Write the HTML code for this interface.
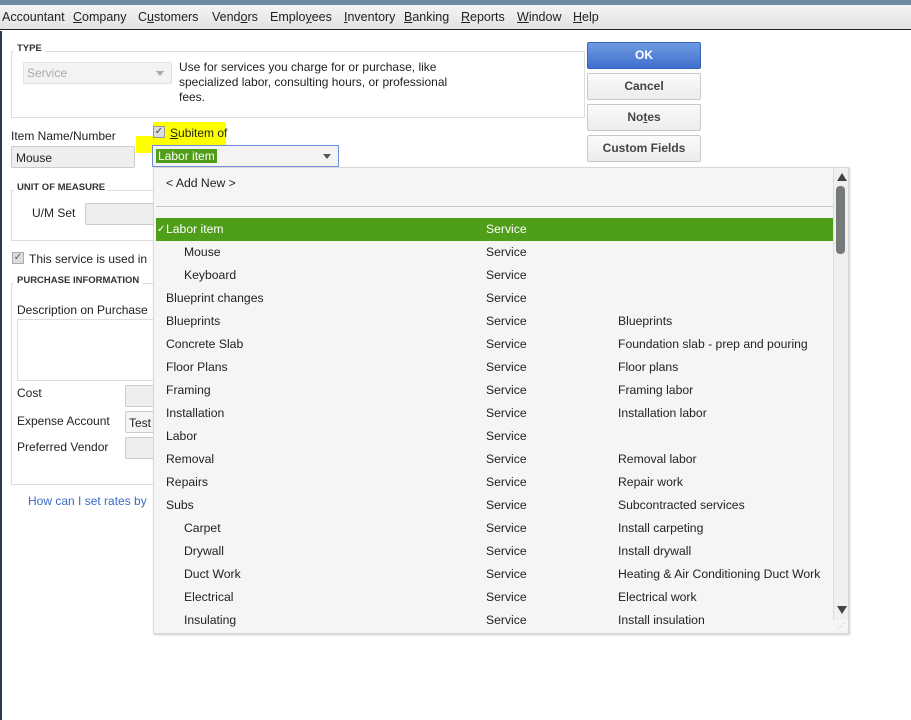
<!DOCTYPE html>
<html><head><meta charset="utf-8"><style>
*{box-sizing:border-box}
body{margin:0;width:911px;height:720px;overflow:hidden;background:#fff;font-family:"Liberation Sans",sans-serif;font-size:12px;color:#222;position:relative}
.a{position:absolute}
.top{left:0;top:0;width:911px;height:5px;background:#6b8aa1}
.menu{left:0;top:5px;width:911px;height:25px;background:linear-gradient(#f4f4f4,#e2e2e2);border-bottom:1px solid #222}
.menu span{position:absolute;top:5px;font-size:12.5px;color:#222}
.ls{left:0;top:31px;width:2px;height:689px;background:#2b3a4a}
.grp{border:1px solid #ddd}
.lbl{font-size:9.5px;font-weight:bold;color:#333;background:#fff;padding:0 3px}
.fld{border:1px solid #ccc;border-radius:2px;background:#eee}
.btn{left:587px;width:114px;height:27px;border:1px solid #c8c8c8;border-radius:2px;background:linear-gradient(#fbfbfb,#ececec);text-align:center;line-height:25px;font-weight:bold;font-size:12px;color:#444}
.dd{left:153px;top:167px;width:696px;height:467px;background:#f5f5f5;border:1px solid #d8d8d8;box-shadow:1px 1px 2px #ccc}
.r{position:absolute;left:0;width:679px;height:23px;line-height:23px;font-size:12.2px;color:#222}
.r span{position:absolute}
</style></head><body>
<div class="a top"></div>
<div class="a menu">
<span style="left:2px">Accountant</span><span style="left:73px"><u>C</u>ompany</span><span style="left:138px">C<u>u</u>stomers</span><span style="left:212px">Vend<u>o</u>rs</span><span style="left:270px">Emplo<u>y</u>ees</span><span style="left:344px"><u>I</u>nventory</span><span style="left:404px"><u>B</u>anking</span><span style="left:461px"><u>R</u>eports</span><span style="left:517px"><u>W</u>indow</span><span style="left:573px"><u>H</u>elp</span>
</div>
<div class="a ls"></div>

<div class="a grp" style="left:11px;top:51px;width:574px;height:67px"></div>
<div class="a lbl" style="left:14px;top:43px">TYPE</div>
<div class="a fld" style="left:23px;top:62px;width:149px;height:22px;background:#f3f3f3;border-color:#e2e2e2;color:#aaa;padding:3px 0 0 3px">Service<span style="position:absolute;right:7px;top:8px;border:4px solid transparent;border-top:5px solid #aaa"></span></div>
<div class="a" style="left:179px;top:60px;line-height:15px;font-size:12px">Use for services you charge for or purchase, like<br>specialized labor, consulting hours, or professional<br>fees.</div>

<div class="a" style="left:11px;top:129px">Item Name/Number</div>
<div class="a fld" style="left:11px;top:146px;width:124px;height:22px;padding:4px 0 0 4px">Mouse</div>
<div class="a" style="left:136px;top:136px;width:90px;height:17px;background:#ffff00"></div>
<div class="a" style="left:153px;top:122px;width:73px;height:31px;background:#ffff00;border-radius:2px"></div>
<div class="a" style="left:153px;top:126px;width:12px;height:12px;border:1px solid #999;background:#ddd;font-size:10px;line-height:10px;text-align:center;color:#444">✓</div>
<div class="a" style="left:170px;top:126px"><u>S</u>ubitem of</div>
<div class="a" style="left:152px;top:145px;width:187px;height:22px;border:1px solid #6a8fd8;background:#f3f3f3"><span style="position:absolute;left:3px;top:3px;background:#4f9e1a;color:#fff;padding:0 2px;line-height:14px">Labor item</span><span style="position:absolute;right:7px;top:8px;border:4px solid transparent;border-top:5px solid #555"></span></div>

<div class="a btn" style="top:42px;background:linear-gradient(#6f9be0,#3f6fcf);border-color:#3a64b8;color:#fff">OK</div>
<div class="a btn" style="top:73px">Cancel</div>
<div class="a btn" style="top:104px">No<u>t</u>es</div>
<div class="a btn" style="top:135px">Custom Fields</div>

<div class="a grp" style="left:11px;top:190px;width:145px;height:51px"></div>
<div class="a lbl" style="left:14px;top:182px">UNIT OF MEASURE</div>
<div class="a" style="left:32px;top:206px">U/M Set</div>
<div class="a fld" style="left:85px;top:203px;width:70px;height:22px"></div>

<div class="a" style="left:12px;top:252px;width:12px;height:12px;border:1px solid #aaa;background:#ddd;font-size:10px;line-height:10px;text-align:center;color:#555">✓</div>
<div class="a" style="left:29px;top:252px">This service is used in</div>
<div class="a grp" style="left:11px;top:283px;width:145px;height:202px"></div>
<div class="a lbl" style="left:14px;top:275px">PURCHASE INFORMATION</div>
<div class="a" style="left:17px;top:303px">Description on Purchase</div>
<div class="a" style="left:17px;top:319px;width:140px;height:62px;border:1px solid #ddd"></div>
<div class="a" style="left:17px;top:386px">Cost</div>
<div class="a fld" style="left:125px;top:385px;width:30px;height:22px"></div>
<div class="a" style="left:17px;top:414px">Expense Account</div>
<div class="a fld" style="left:125px;top:411px;width:30px;height:22px;padding:4px 0 0 3px;background:#f4f4f4">Test</div>
<div class="a" style="left:17px;top:440px">Preferred Vendor</div>
<div class="a fld" style="left:125px;top:437px;width:30px;height:22px"></div>
<div class="a" style="left:28px;top:494px;color:#3a6bc9">How can I set rates by</div>

<div class="a dd">
<div class="r" style="top:4px;left:12px">&lt; Add New &gt;</div>
<div style="position:absolute;left:2px;top:38px;width:677px;height:1px;background:#c8c8c8"></div>
<div class="r" style="top:50px;left:2px;width:677px;background:#4f9e1a;color:#fff"><span style="left:1px;font-size:10px">✓</span><span style="left:10px">Labor item</span><span style="left:330px">Service</span></div>
<div class="r" style="top:73px"><span style="left:30px">Mouse</span><span style="left:332px">Service</span></div>
<div class="r" style="top:96px"><span style="left:30px">Keyboard</span><span style="left:332px">Service</span></div>
<div class="r" style="top:119px"><span style="left:12px">Blueprint changes</span><span style="left:332px">Service</span></div>
<div class="r" style="top:142px"><span style="left:12px">Blueprints</span><span style="left:332px">Service</span><span style="left:464px">Blueprints</span></div>
<div class="r" style="top:165px"><span style="left:12px">Concrete Slab</span><span style="left:332px">Service</span><span style="left:464px">Foundation slab - prep and pouring</span></div>
<div class="r" style="top:188px"><span style="left:12px">Floor Plans</span><span style="left:332px">Service</span><span style="left:464px">Floor plans</span></div>
<div class="r" style="top:211px"><span style="left:12px">Framing</span><span style="left:332px">Service</span><span style="left:464px">Framing labor</span></div>
<div class="r" style="top:234px"><span style="left:12px">Installation</span><span style="left:332px">Service</span><span style="left:464px">Installation labor</span></div>
<div class="r" style="top:257px"><span style="left:12px">Labor</span><span style="left:332px">Service</span></div>
<div class="r" style="top:280px"><span style="left:12px">Removal</span><span style="left:332px">Service</span><span style="left:464px">Removal labor</span></div>
<div class="r" style="top:303px"><span style="left:12px">Repairs</span><span style="left:332px">Service</span><span style="left:464px">Repair work</span></div>
<div class="r" style="top:326px"><span style="left:12px">Subs</span><span style="left:332px">Service</span><span style="left:464px">Subcontracted services</span></div>
<div class="r" style="top:349px"><span style="left:30px">Carpet</span><span style="left:332px">Service</span><span style="left:464px">Install carpeting</span></div>
<div class="r" style="top:372px"><span style="left:30px">Drywall</span><span style="left:332px">Service</span><span style="left:464px">Install drywall</span></div>
<div class="r" style="top:395px"><span style="left:30px">Duct Work</span><span style="left:332px">Service</span><span style="left:464px">Heating &amp; Air Conditioning Duct Work</span></div>
<div class="r" style="top:418px"><span style="left:30px">Electrical</span><span style="left:332px">Service</span><span style="left:464px">Electrical work</span></div>
<div class="r" style="top:441px"><span style="left:30px">Insulating</span><span style="left:332px">Service</span><span style="left:464px">Install insulation</span></div>
<div style="position:absolute;left:679px;top:0;width:15px;height:452px;background:#f0f0f0;border-left:1px solid #ddd"></div>
<div style="position:absolute;left:683px;top:5px;border:5px solid transparent;border-bottom:8px solid #444;border-top:0"></div>
<div style="position:absolute;left:682px;top:18px;width:9px;height:68px;background:#767a7a;border-radius:4px"></div>
<div style="position:absolute;left:683px;top:438px;border:5px solid transparent;border-top:8px solid #444;border-bottom:0"></div>
<div style="position:absolute;left:683px;top:455px;color:#bbb;font-size:8px;line-height:8px">⋰</div>
</div>
</body></html>
